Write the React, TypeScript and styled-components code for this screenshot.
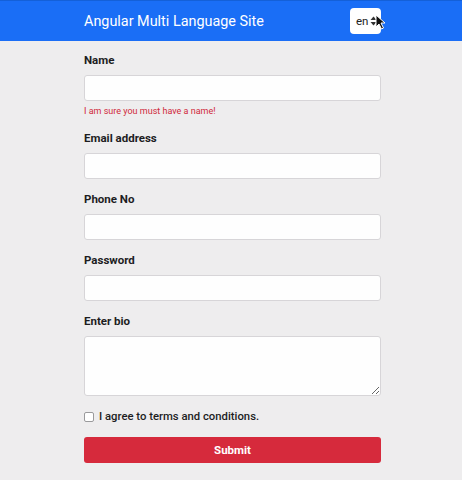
import React from "react";
import styled, { createGlobalStyle } from "styled-components";

const Global = createGlobalStyle`
  html, body { margin: 0; padding: 0; background: #eeedee; }
  body { font-family: Roboto, "Liberation Sans", Arial, sans-serif; color: #212529; }
  * { box-sizing: border-box; }
`;

const Header = styled.header`
  height: 41px;
  background: #1a6ef6;
  border-top: 1px solid #1460d8;
  display: flex;
  align-items: center;
`;

const HeaderInner = styled.div`
  width: 297px;
  margin-left: 84px;
  display: flex;
  align-items: center;
  justify-content: space-between;
`;

const Title = styled.span`
  color: #fff;
  font-size: 14.4px;
  font-weight: 400;
`;

const LangWrap = styled.div`
  position: relative;
`;

const LangSelect = styled.div`
  width: 31px;
  height: 26px;
  background: #fff;
  border-radius: 4px;
  display: flex;
  align-items: center;
  padding-left: 6px;
  gap: 2px;
  font-size: 11.5px;
  color: #222;
`;

const Cursor = styled.svg`
  position: absolute;
  left: 25px;
  top: 6px;
`;

const Form = styled.form`
  width: 297px;
  margin-left: 84px;
  padding-top: 12px;
  display: flex;
  flex-direction: column;
`;

const Field = styled.div<{ $mb?: number }>`
  display: flex;
  flex-direction: column;
  margin-bottom: ${(p) => p.$mb ?? 13}px;
`;

const Label = styled.label`
  font-size: 11.5px;
  font-weight: 700;
  color: #1d1d1f;
  line-height: 14px;
  margin-bottom: 8px;
`;

const Input = styled.input`
  width: 100%;
  height: 26px;
  background: #fefefe;
  border: 1px solid #d7d5d8;
  border-radius: 3px;
  outline: none;
`;

const TextArea = styled.textarea`
  width: 100%;
  height: 60px;
  background: #fefefe;
  border: 1px solid #d7d5d8;
  border-radius: 3px;
  outline: none;
  resize: vertical;
  display: block;
`;

const Error = styled.div`
  font-size: 9px;
  color: #d0283a;
  margin-top: 4px;
  line-height: 12px;
`;

const CheckRow = styled.label`
  display: flex;
  align-items: center;
  gap: 5px;
  font-size: 11.3px;
  line-height: 14px;
  font-weight: 500;
  color: #1d1d1f;
  margin-bottom: 13px;
`;

const Box = styled.span`
  width: 10px;
  height: 10px;
  border: 1px solid #9a9a9c;
  border-radius: 2px;
  background: #fff;
`;

const Submit = styled.button`
  width: 100%;
  height: 26px;
  background: #d62a3c;
  color: #fff;
  border: none;
  border-radius: 3px;
  font-family: inherit;
  font-size: 11.5px;
  font-weight: 700;
`;

export default function App() {
  return (
    <>
      <Global />
      <Header>
        <HeaderInner>
          <Title>Angular Multi Language Site</Title>
          <LangWrap>
            <LangSelect>
              en
              <svg width="7" height="10" viewBox="0 0 7 10">
                <path d="M3.5 0.5 L6.5 4 L0.5 4 Z" fill="#333" />
                <path d="M3.5 9.5 L6.5 6 L0.5 6 Z" fill="#333" />
              </svg>
            </LangSelect>
            <Cursor width="11" height="16" viewBox="0 0 11 16">
              <path d="M1 1 L1 13 L4 10 L6.5 15 L8.5 14 L6 9 L10 9 Z" fill="#111" stroke="#fff" strokeWidth="1" />
            </Cursor>
          </LangWrap>
        </HeaderInner>
      </Header>
      <Form>
        <Field $mb={14}>
          <Label>Name</Label>
          <Input />
          <Error>I am sure you must have a name!</Error>
        </Field>
        <Field>
          <Label>Email address</Label>
          <Input />
        </Field>
        <Field>
          <Label>Phone No</Label>
          <Input />
        </Field>
        <Field>
          <Label>Password</Label>
          <Input type="password" />
        </Field>
        <Field $mb={14}>
          <Label>Enter bio</Label>
          <TextArea />
        </Field>
        <CheckRow>
          <Box />
          I agree to terms and conditions.
        </CheckRow>
        <Submit type="button">Submit</Submit>
      </Form>
    </>
  );
}
